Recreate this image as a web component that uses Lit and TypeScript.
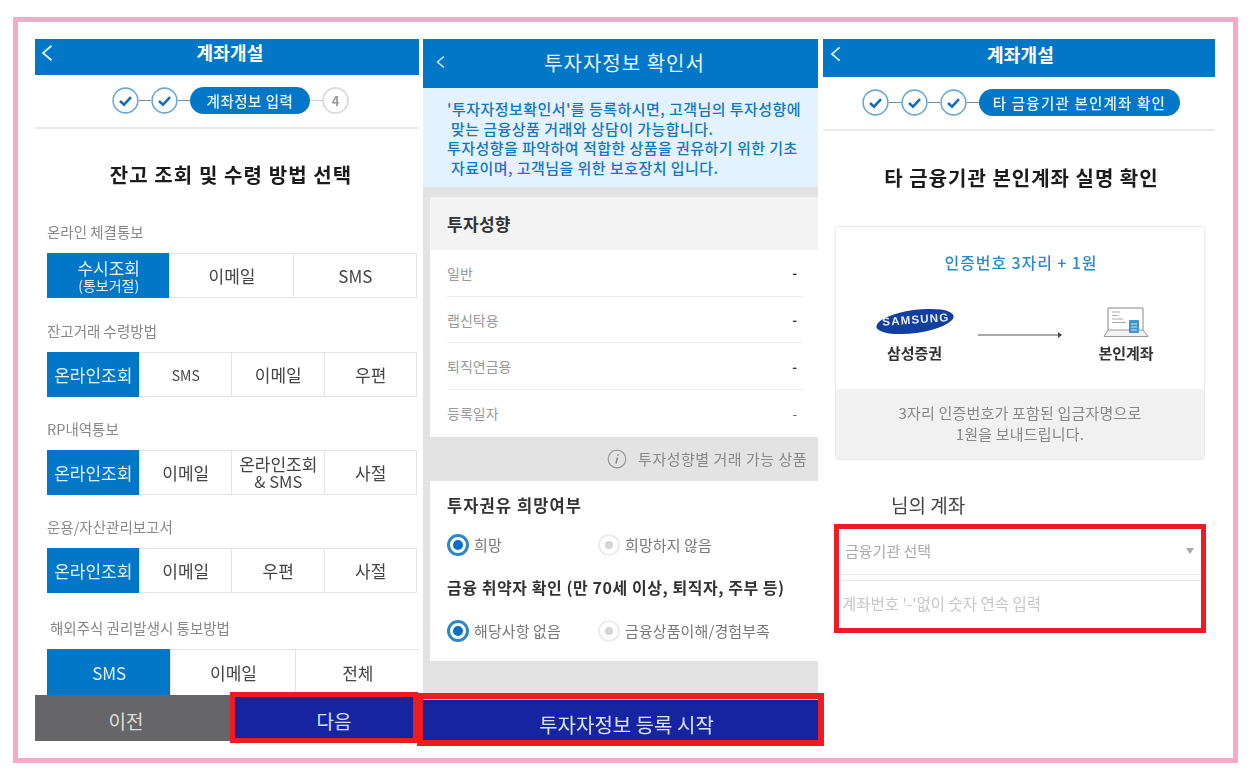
import { LitElement, html, css } from "lit";
import { customElement } from "lit/decorators.js";

const chevron = (cls: string) => html`<svg class="chev ${cls}" viewBox="0 0 12 16" fill="none"><path d="M10.5 .8 2 8l8.5 7.2" stroke="#dff0fb" stroke-width="1.8"/></svg>`;

const check = html`<svg class="step" viewBox="0 0 27 27"><circle cx="13.5" cy="13.5" r="12.4" fill="#fff" stroke="#6ba9d4" stroke-width="1.6"/><path d="M8 14l4 3.6 7-7.4" fill="none" stroke="#0f6fb8" stroke-width="2.6"/></svg>`;

const conn = html`<span class="conn"></span>`;

type Seg = { label: string; sub?: string; small?: boolean };
const groups: { title: string; inset?: boolean; opts: (string | Seg)[]; cls: string }[] = [
  { title: "온라인 체결통보", cls: "g1", opts: [{ label: "수시조회", sub: "(통보거절)" }, "이메일", "SMS"] },
  { title: "잔고거래 수령방법", cls: "g2", opts: ["온라인조회", { label: "SMS", small: true }, "이메일", "우편"] },
  { title: "RP내역통보", cls: "g3", opts: ["온라인조회", "이메일", { label: "온라인조회", sub: "& SMS" }, "사절"] },
  { title: "운용/자산관리보고서", cls: "g4", opts: ["온라인조회", "이메일", "우편", "사절"] },
  { title: "해외주식 권리발생시 통보방법", cls: "g5", inset: true, opts: ["SMS", "이메일", "전체"] },
];

const radio = (on: boolean) => html`<span class="radio ${on ? "on" : ""}"></span>`;

@customElement("app-root")
export class AppRoot extends LitElement {
  static styles = css`
    :host { display: block; width: 1259px; height: 780px; background: #fff; font-family: "Noto Sans CJK KR", "Noto Sans", sans-serif; overflow: hidden; color: #333; }
    .frame { box-sizing: border-box; width: 1225px; height: 746px; margin: 17px 0 0 13px; border: 5px solid #f9a9c8; padding: 17px 0 0 17px; display: grid; grid-template-columns: 384px 395px 393px; column-gap: 4px; align-items: start; background: #fff; }
    .screen { display: flex; flex-direction: column; min-width: 0; filter: blur(.35px); }
    .screen.third { margin-left: 1px; }
    .head { background: #0377c7; color: #fff; display: flex; align-items: center; justify-content: center; position: relative; font-weight: 700; font-size: 18px; letter-spacing: .2px; box-sizing: border-box; }
    .h1 { height: 36px; padding: 0 0 10px 6px; }
    .h3 { height: 38px; padding: 0 0 9px 3px; }
    .h2 { height: 49px; font-weight: 400; font-size: 20px; letter-spacing: 1px; color: #e6f3fc; padding: 0 0 2px 8px; }
    .chev { position: absolute; width: 12px; height: 16px; }
    .c1 { left: 6px; top: 6px; }
    .c2 { left: 13px; top: 15px; width: 9px; }
    .c3 { left: 7px; top: 7px; width: 11px; }
    .steps { display: flex; align-items: center; justify-content: center; border-bottom: 2px solid #e9e9e9; box-sizing: border-box; }
    .s1 { height: 54px; padding: 0 0 2px 7px; }
    .s3 { height: 54px; padding: 0 0 1px 4px; }
    .step { width: 27px; height: 27px; flex: none; display: block; }
    .conn { width: 12px; height: 1px; background: #6b8fa8; flex: none; }
    .conn.dim { background: #ccc; }
    .pill { background: #0377c7; color: #e6f3fc; height: 27px; border-radius: 14px; display: flex; align-items: center; justify-content: center; font-size: 14.5px; font-weight: 500; letter-spacing: .5px; box-sizing: border-box; flex: none; white-space: nowrap; }
    .pill1 { width: 120px; }
    .pill3 { width: 201px; letter-spacing: 1.2px; }
    .num { width: 27px; height: 27px; box-sizing: border-box; border-radius: 50%; border: 2px solid #ddd; color: #999; font-size: 13px; font-weight: 700; display: flex; align-items: center; justify-content: center; flex: none; }
    .bigtitle { color: #1c1c1c; font-weight: 700; font-size: 20px; text-align: center; letter-spacing: 1.1px; line-height: 30px; }
    .t1 { padding: 31px 0 0 0; height: 60px; box-sizing: border-box; margin-left: 8px; }
    .scroll1 { height: 506px; overflow: hidden; padding: 33px 2px 0 12px; box-sizing: border-box; }
    .glabel { color: #888; font-size: 14.5px; line-height: 20px; height: 20px; white-space: nowrap; }
    .glabel.inset { padding-left: 3px; }
    .g { display: flex; flex-direction: column; gap: 11px; }
    .g + .g { margin-top: 23px; }
    .g + .g3, .g + .g4 { margin-top: 22px; }
    .g + .g5 { margin-top: 25px; }
    .seg { display: flex; height: 45px; border: 1px solid #e4e4e4; box-sizing: border-box; flex: none; }
    .g5 .seg { height: 47px; margin-right: -3px; }
    .opt { flex: 1 1 0; display: flex; flex-direction: column; align-items: center; justify-content: center; color: #444; font-size: 17px; line-height: 18px; border-left: 1px solid #e4e4e4; text-align: center; min-width: 0; padding-left: 1px; }
    .opt:first-child { border-left: 0; }
    .opt.act { background: #0377c7; color: #e3f1fb; margin: -1px 0 -1px -1px; }
    .opt .sub { font-size: 16.5px; line-height: 17px; white-space: nowrap; }
    .opt.act .sub { font-size: 14px; line-height: 16px; }
    .opt .main { white-space: nowrap; }
    .opt.small { font-size: 14px; }
    .foot { display: flex; height: 46px; flex: none; }
    .btn { display: flex; align-items: center; justify-content: center; font-size: 19px; box-sizing: border-box; }
    .prev { background: #666668; width: 200px; color: #ddd; flex: none; padding: 4px 18px 0 0; }
    .next { background: #16259f; color: #d8e2f6; width: 178px; height: 41px; margin-top: 2px; outline: 5px solid #ed1c24; flex: none; padding: 5px 0 0 20px; }
    .info { background: #e3f2fc; height: 99px; box-sizing: border-box; padding: 11px 0 0 24px; color: #1377bf; font-size: 15px; font-weight: 500; line-height: 19.7px; white-space: nowrap; letter-spacing: .45px; }
    .info .ind { padding-left: 4px; }
    .grey { background: #e3e3e3; padding: 10px 0 38px 7px; height: 512px; box-sizing: border-box; display: flex; flex-direction: column; }
    .card { background: #fff; }
    .chead { background: #f3f3f3; height: 53px; display: flex; align-items: center; padding-left: 17px; font-size: 17px; font-weight: 700; color: #333; letter-spacing: .3px; }
    .rows { padding: 0 15px 0 17px; }
    .row { display: flex; height: 46.7px; box-sizing: border-box; justify-content: space-between; align-items: center; color: #999; font-size: 14px; border-bottom: 1px solid #ececec; padding-right: 6px; }
    .row:last-child { border-bottom: 0; }
    .row b { color: #333; font-weight: 700; font-size: 13px; }
    .row:last-child b { font-weight: 400; color: #666; }
    .band { height: 44px; display: flex; align-items: center; justify-content: flex-end; gap: 11px; padding-right: 11px; color: #888; font-size: 15px; letter-spacing: .5px; margin-left: -7px; }
    .band svg { width: 20px; height: 20px; }
    .card2 { background: #fff; height: 180px; padding: 12px 0 0 17px; box-sizing: border-box; }
    .q { font-size: 16.5px; font-weight: 700; color: #333; line-height: 24px; letter-spacing: 1.1px; white-space: nowrap; }
    .radios { display: grid; grid-template-columns: 151px 1fr; height: 22px; align-items: center; color: #777; font-size: 15px; margin: 17px 0 0; }
    .ritem { display: flex; align-items: center; gap: 5px; letter-spacing: .1px; }
    .q2 { margin-top: 19px; font-size: 16px; letter-spacing: .55px; }
    .radio { width: 22px; height: 22px; box-sizing: border-box; border-radius: 50%; border: 2px solid #ececec; flex: none; display: flex; align-items: center; justify-content: center; }
    .radio::after { content: ""; width: 8px; height: 8px; border-radius: 50%; background: #d4d4d4; }
    .radio.on { border: 3px solid #2a87c9; }
    .radio.on::after { width: 10px; height: 10px; background: #0a6fc0; }
    .radios2 { margin-top: 21px; }
    .start { height: 41px; background: #16259f; color: #d8e2f6; outline: 6px solid #ed1c24; border-top: 1px solid #b9c6ee; box-sizing: border-box; display: flex; align-items: center; justify-content: center; font-size: 20px; padding: 9px 0 0 12px; }
    .t3 { padding-top: 32px; height: 96px; box-sizing: border-box; margin-left: 5px; letter-spacing: 1px; }
    .box { margin: 0 11px 0 13px; height: 232px; box-shadow: 0 0 2px rgba(0,0,0,.3); border-radius: 2px; display: flex; flex-direction: column; }
    .boxtop { height: 162px; box-sizing: border-box; display: flex; flex-direction: column; align-items: center; padding: 23px 0 0; }
    .blue { color: #2a8acb; font-size: 16px; font-weight: 500; line-height: 24px; letter-spacing: .9px; padding-left: 2px; }
    .flow { display: flex; width: 100%; margin-top: 34px; align-items: flex-start; }
    .party { display: flex; flex-direction: column; align-items: center; font-size: 15px; line-height: 22px; font-weight: 700; color: #333; gap: 6px; white-space: nowrap; }
    .p1 { width: 77px; margin-left: 40px; }
    .p2 { width: 60px; margin-left: 33px; }
    .arrow { width: 85px; height: 10px; margin: 22px 0 0 25px; flex: none; }
    .logo { width: 78px; height: 28px; display: block; }
    .lap { width: 46px; height: 31px; display: block; margin-top: -1px; margin-bottom: -2px; }
    .boxfoot { flex: 1; background: #f1f1f1; color: #888; font-size: 15px; line-height: 21px; display: flex; flex-direction: column; align-items: center; justify-content: center; letter-spacing: .2px; padding-bottom: 2px; }
    .acct { font-size: 19px; color: #444; padding-left: 68px; margin-top: 32px; line-height: 28px; height: 28px; }
    .fields { margin: 5px 9px 0 11px; height: 109px; box-sizing: border-box; border: 5px solid #ed1c24; }
    .sel { height: 46px; box-sizing: border-box; border-bottom: 1px solid #e8e8e8; display: flex; align-items: center; justify-content: space-between; padding: 0 7px 2px 6px; color: #aaa; font-size: 15px; }
    .tri { width: 0; height: 0; border: 4px solid transparent; border-top: 6px solid #aaa; border-bottom: 0; }
    .inp { margin-top: 5px; border-top: 1px solid #e8e8e8; height: 46px; box-sizing: border-box; display: flex; align-items: center; padding: 0 0 2px 3px; color: #c6c6c6; font-size: 15.5px; white-space: nowrap; }
  `;

  private seg(g: (typeof groups)[number]) {
    return html`<div class="g ${g.cls}">
      <div class="glabel ${g.inset ? "inset" : ""}">${g.title}</div>
      <div class="seg">
        ${g.opts.map((o, i) => {
          const s: Seg = typeof o === "string" ? { label: o } : o;
          return html`<div class="opt ${i === 0 ? "act" : ""} ${s.small ? "small" : ""}"><span class="main">${s.label}</span>${s.sub ? html`<span class="sub">${s.sub}</span>` : ""}</div>`;
        })}
      </div>
    </div>`;
  }

  render() {
    return html`<div class="frame">
      <section class="screen">
        <div class="head h1">${chevron("c1")}계좌개설</div>
        <div class="steps s1">${check}${conn}${check}${conn}<div class="pill pill1">계좌정보 입력</div><span class="conn dim"></span><div class="num">4</div></div>
        <div class="bigtitle t1">잔고 조회 및 수령 방법 선택</div>
        <div class="scroll1">${groups.map((g) => this.seg(g))}</div>
        <div class="foot"><div class="btn prev">이전</div><div class="btn next">다음</div></div>
      </section>

      <section class="screen">
        <div class="head h2">${chevron("c2")}투자자정보 확인서</div>
        <div class="info">
          <div>'투자자정보확인서'를 등록하시면, 고객님의 투자성향에</div>
          <div class="ind">맞는 금융상품 거래와 상담이 가능합니다.</div>
          <div>투자성향을 파악하여 적합한 상품을 권유하기 위한 기초</div>
          <div class="ind">자료이며, 고객님을 위한 보호장치 입니다.</div>
        </div>
        <div class="grey">
          <div class="card">
            <div class="chead">투자성향</div>
            <div class="rows">
              <div class="row"><span>일반</span><b>-</b></div>
              <div class="row"><span>랩신탁용</span><b>-</b></div>
              <div class="row"><span>퇴직연금용</span><b>-</b></div>
              <div class="row"><span>등록일자</span><b>-</b></div>
            </div>
          </div>
          <div class="band">
            <svg viewBox="0 0 20 20" fill="none"><circle cx="10" cy="10" r="8.8" stroke="#999" stroke-width="1.2"/><path d="M11 5.2v1.6M10.4 8.6 9 14.6" stroke="#888" stroke-width="1.6"/></svg>
            <span>투자성향별 거래 가능 상품</span>
          </div>
          <div class="card2">
            <div class="q">투자권유 희망여부</div>
            <div class="radios"><div class="ritem">${radio(true)}<span>희망</span></div><div class="ritem">${radio(false)}<span>희망하지 않음</span></div></div>
            <div class="q q2">금융 취약자 확인 (만 70세 이상, 퇴직자, 주부 등)</div>
            <div class="radios radios2"><div class="ritem">${radio(true)}<span>해당사항 없음</span></div><div class="ritem">${radio(false)}<span>금융상품이해/경험부족</span></div></div>
          </div>
        </div>
        <div class="start">투자자정보 등록 시작</div>
      </section>

      <section class="screen third">
        <div class="head h3">${chevron("c3")}계좌개설</div>
        <div class="steps s3">${check}${conn}${check}${conn}${check}${conn}<div class="pill pill3">타 금융기관 본인계좌 확인</div></div>
        <div class="bigtitle t3">타 금융기관 본인계좌 실명 확인</div>
        <div class="box">
          <div class="boxtop">
            <div class="blue">인증번호 3자리 + 1원</div>
            <div class="flow">
              <div class="party p1">
                <svg class="logo" viewBox="0 0 78 28">
                  <ellipse cx="39" cy="13.500" rx="39" ry="11.500" transform="rotate(-8 39 13.500)" fill="#123f9c"/>
                  <text x="40" y="15.500" text-anchor="middle" transform="rotate(-4 39 14)" font-family="Liberation Sans" font-weight="700" font-size="11.500" letter-spacing="1.2" fill="#e8eefa">SAMSUNG</text>
                </svg>
                <span>삼성증권</span>
              </div>
              <svg class="arrow" viewBox="0 0 85 10"><path d="M0 5h83" stroke="#555" stroke-width="1.2"/><path d="M80 2l4 3-4 3z" fill="#444"/></svg>
              <div class="party p2">
                <svg class="lap" viewBox="0 0 46 31" fill="none">
                  <path d="M5 23V1h35v22" stroke="#888" stroke-width="1"/>
                  <path d="M5 23 1 29.500h44L40 23z" stroke="#999" stroke-width="1" fill="#f2f2f2"/>
                  <path d="M9 5h8M9 8.500h6M9 12h11M9 15.500h14" stroke="#aaa" stroke-width="1"/>
                  <rect x="26" y="13" width="10" height="13" rx="1" fill="#3f95d2"/>
                  <path d="M28 17h6M28 20h6M28 23h6" stroke="#cfe6f6" stroke-width="1"/>
                </svg>
                <span>본인계좌</span>
              </div>
            </div>
          </div>
          <div class="boxfoot"><div>3자리 인증번호가 포함된 입금자명으로</div><div>1원을 보내드립니다.</div></div>
        </div>
        <div class="acct">님의 계좌</div>
        <div class="fields">
          <div class="sel"><span>금융기관 선택</span><span class="tri"></span></div>
          <div class="inp">계좌번호 '-'없이 숫자 연속 입력</div>
        </div>
      </section>
    </div>`;
  }
}
